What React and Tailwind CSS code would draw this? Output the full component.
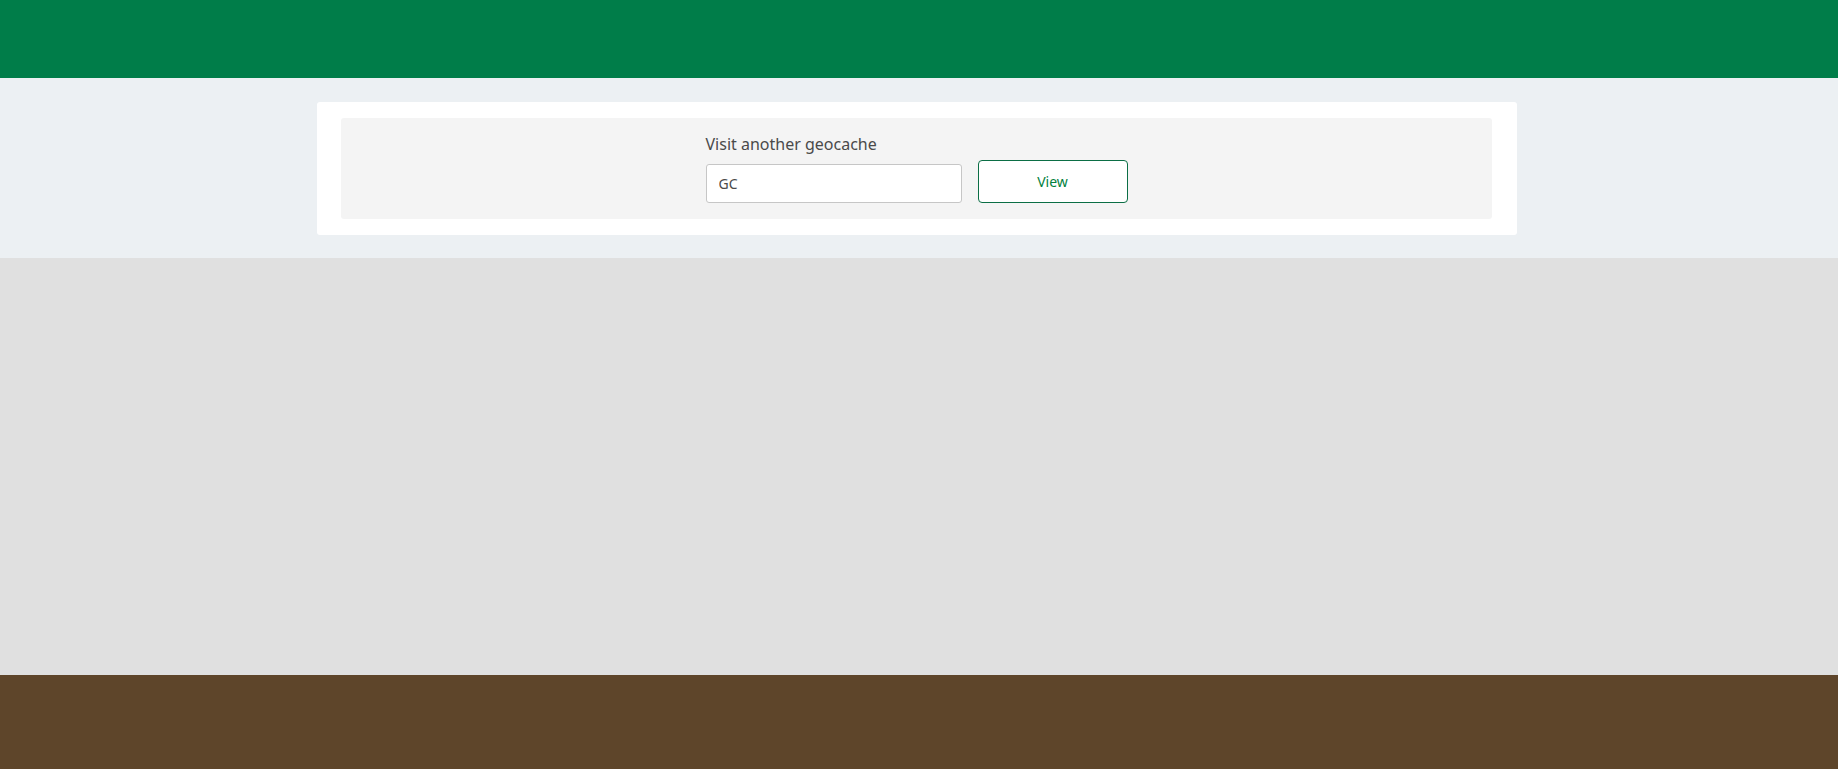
export default function App() {
  return (
    <div
      className="min-h-screen flex flex-col bg-[#e0e0e0]"
      style={{ fontFamily: '"Noto Sans", "Open Sans", sans-serif' }}
    >
      {/* Header bar */}
      <header className="h-[78px] bg-[#007d49]" />

      {/* Search strip */}
      <section className="bg-[#ecf0f3] pt-[24px] pb-[23px] pr-[4px]">
        <div className="mx-auto w-[1200px] bg-white rounded-[3px] pl-[24px] pr-[25px] py-[16px]">
          <div className="bg-[#f4f4f4] rounded-[3px] flex justify-center pt-[14px] pb-[16px]">
            <form className="flex items-end gap-[16px]" onSubmit={(e) => e.preventDefault()}>
              <div className="flex flex-col">
                <label className="text-[16px] leading-[24px] text-[#4a4a4a] mb-[8px]">
                  Visit another geocache
                </label>
                <input
                  defaultValue="GC"
                  className="w-[256px] h-[39px] bg-white border border-[#c6c6c6] rounded-[3px] px-[12px] text-[14px] text-[#4a4a4a] outline-none"
                />
              </div>
              <button
                type="submit"
                className="w-[150px] h-[43px] bg-white border border-[#0b6e45] rounded-[4px] text-[14px] text-[#02813e]"
              >
                View
              </button>
            </form>
          </div>
        </div>
      </section>

      {/* Empty content area */}
      <main className="h-[417px] bg-[#e0e0e0]" />

      {/* Footer */}
      <footer className="h-[94px] bg-[#5e452a]" />
    </div>
  );
}
